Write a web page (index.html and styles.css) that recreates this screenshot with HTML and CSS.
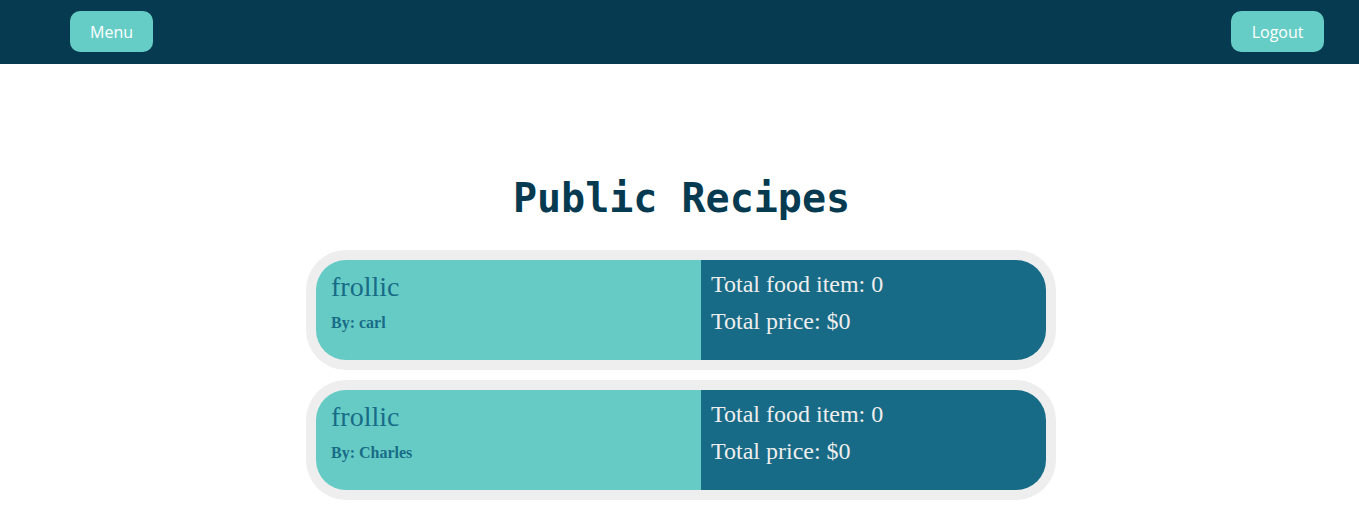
FILE: index.html
```html
<!DOCTYPE html>
<html>
<head>
<meta charset="utf-8">
<link rel="stylesheet" href="styles.css">
</head>
<body>
<header class="topbar">
  <button class="nav-btn">Menu</button>
  <button class="nav-btn">Logout</button>
</header>
<main class="content">
  <h1 class="title">Public Recipes</h1>
  <div class="list">
    <div class="card">
      <div class="card-inner">
        <div class="left">
          <div class="name">frollic</div>
          <div class="author">By: carl</div>
        </div>
        <div class="right">
          <div class="stat">Total food item: 0</div>
          <div class="stat">Total price: $0</div>
        </div>
      </div>
    </div>
    <div class="card">
      <div class="card-inner">
        <div class="left">
          <div class="name">frollic</div>
          <div class="author">By: Charles</div>
        </div>
        <div class="right">
          <div class="stat">Total food item: 0</div>
          <div class="stat">Total price: $0</div>
        </div>
      </div>
    </div>
  </div>
</main>
</body>
</html>
```
FILE: styles.css
```css
html, body {
  margin: 0;
  padding: 0;
  background: #ffffff;
}
body {
  font-family: "Liberation Serif", serif;
}
.topbar {
  height: 64px;
  background: #053a50;
  display: flex;
  justify-content: space-between;
  align-items: center;
  padding: 0 35px 0 70px;
  box-sizing: border-box;
}
.nav-btn {
  height: 41px;
  padding: 0 20px;
  border: none;
  border-radius: 10px;
  background: #66cdc6;
  color: #ffffff;
  font-family: "Open Sans", sans-serif;
  font-size: 16px;
  margin-top: -1px;
}
.nav-btn:last-child {
  padding: 0 20.5px;
}
.content {
  display: flex;
  flex-direction: column;
  align-items: center;
}
.title {
  font-family: "DejaVu Sans Mono", monospace;
  font-weight: bold;
  font-size: 40px;
  color: #053a50;
  margin: 111px 0 28px 0;
  padding-left: 4px;
  line-height: 47px;
}
.list {
  display: flex;
  flex-direction: column;
  gap: 10px;
  padding-left: 3px;
}
.card {
  width: 750px;
  box-sizing: border-box;
  padding: 10px;
  background: #eeeeee;
  border-radius: 40px;
}
.card-inner {
  display: flex;
  height: 100px;
  border-radius: 30px;
  overflow: hidden;
}
.left {
  width: 385px;
  background: #66cbc4;
  padding: 10px 15px;
  box-sizing: border-box;
}
.right {
  flex: 1;
  background: #186b87;
  padding: 10px 10px;
  box-sizing: border-box;
}
.name {
  font-size: 28px;
  line-height: 34px;
  color: #186b87;
}
.author {
  font-size: 16px;
  font-weight: bold;
  color: #186b87;
  margin-top: 10px;
}
.stat {
  font-size: 24px;
  line-height: 28px;
  color: #eeeeee;
  margin-bottom: 9px;
}
```
